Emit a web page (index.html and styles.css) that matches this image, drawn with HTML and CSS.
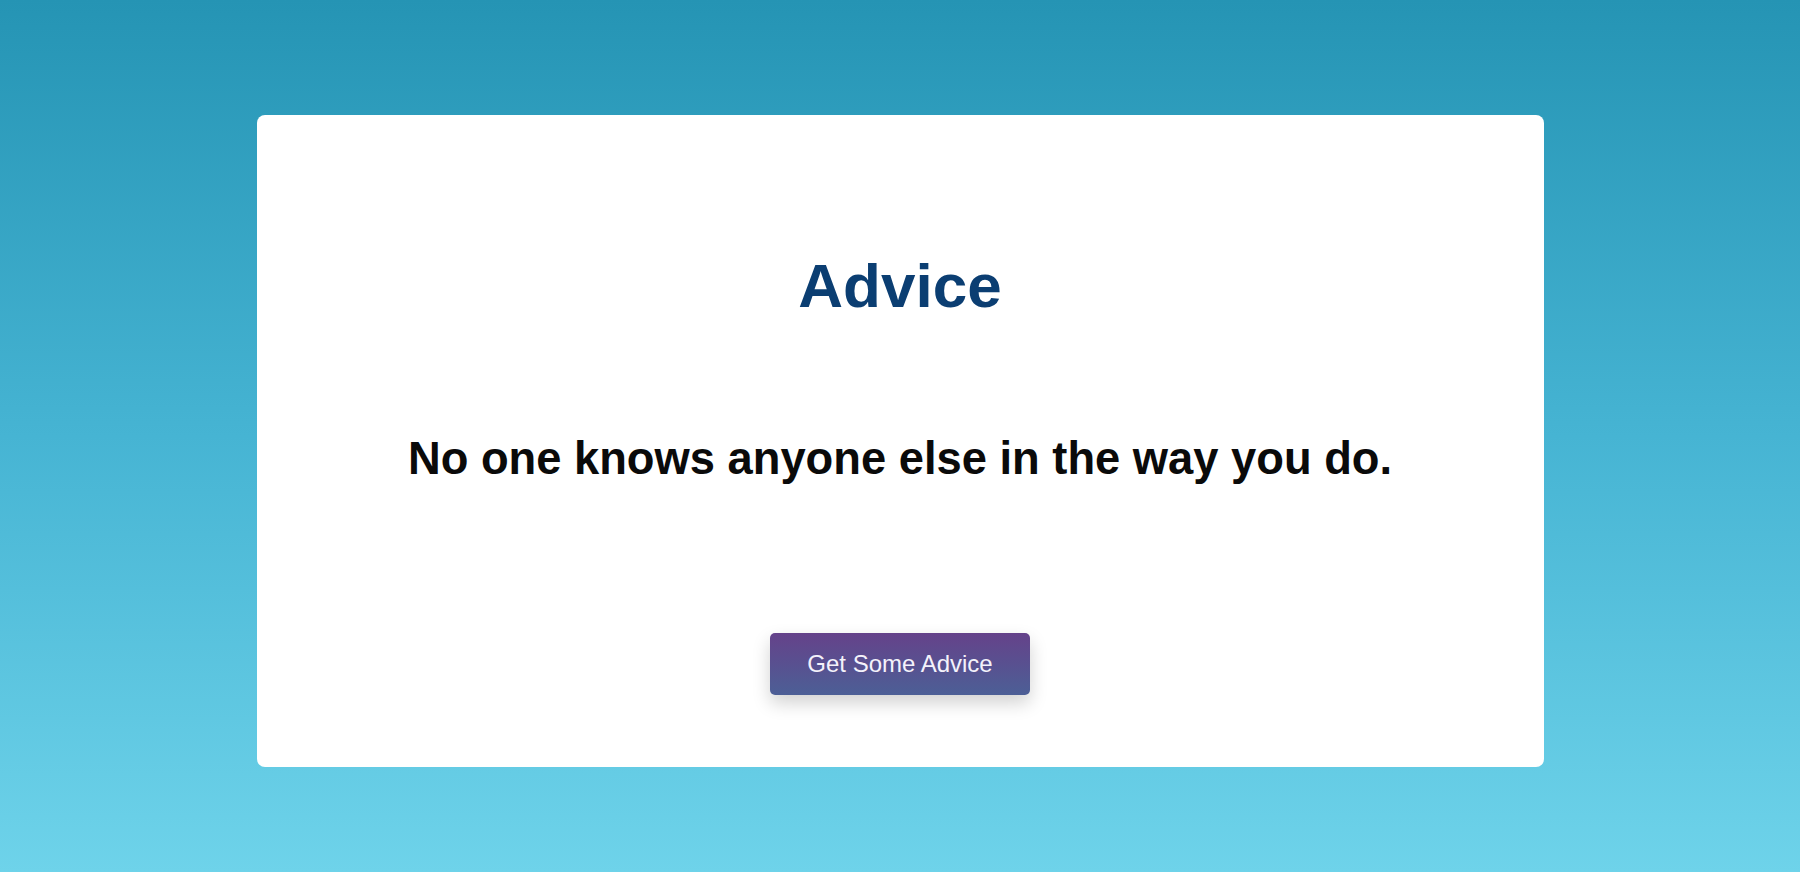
FILE: index.html
```html
<!DOCTYPE html>
<html lang="en">
<head>
<meta charset="utf-8">
<title>Advice</title>
<link rel="stylesheet" href="styles.css">
</head>
<body>
<main class="page">
  <section class="card">
    <h1 class="title">Advice</h1>
    <p class="quote">No one knows anyone else in the way you do.</p>
    <button class="btn" type="button">Get Some Advice</button>
  </section>
</main>
</body>
</html>
```

FILE: styles.css
```css
html, body {
  margin: 0;
  padding: 0;
  height: 100%;
}
body {
  background: linear-gradient(to bottom, #2594b4 0%, #46b4d3 50%, #6ed3ea 100%);
  font-family: "Liberation Sans", Arial, sans-serif;
}
.page {
  display: flex;
  justify-content: center;
  padding-top: 115px;
}
.card {
  width: 1287px;
  height: 652px;
  box-sizing: border-box;
  background: #ffffff;
  border-radius: 8px;
  display: flex;
  flex-direction: column;
  align-items: center;
  padding-top: 136px;
}
.title {
  margin: 0;
  font-size: 62px;
  font-weight: bold;
  color: #0b3e72;
  line-height: 70px;
}
.quote {
  margin: 113px 0 0;
  font-size: 45.3px;
  font-weight: bold;
  color: #0a0a0a;
  line-height: 50px;
}
.btn {
  margin-top: 149px;
  height: 62px;
  padding: 0 37px;
  border: none;
  border-radius: 5px;
  background: linear-gradient(to bottom, #65428a 0%, #4c5f96 100%);
  color: #f4f2fb;
  font-family: "Liberation Sans", Arial, sans-serif;
  font-size: 24px;
  box-shadow: 0 8px 18px rgba(0, 0, 0, 0.18);
  cursor: pointer;
}
```
